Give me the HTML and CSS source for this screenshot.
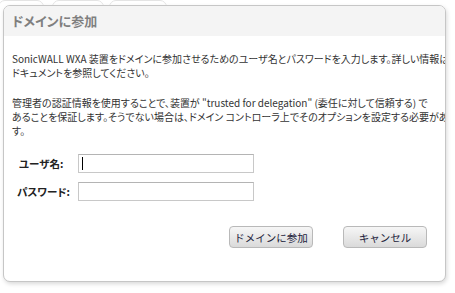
FILE: index.html
```html
<!DOCTYPE html>
<html lang="ja">
<head>
  <meta charset="UTF-8">
  <title>ドメインに参加</title>
  <link rel="stylesheet" href="styles.css">
</head>
<body>
  <div class="tabs">
    <div class="tab t1"></div>
    <div class="tab t2"></div>
    <div class="tab t3"></div>
  </div>
  <div class="dialog">
    <div class="dialog-head">ドメインに参加</div>
    <div class="dialog-body">
      <p>SonicWALL WXA 装置をドメインに参加させるためのユーザ名とパスワードを入力します。詳しい情報は<br>ドキュメントを参照してください。</p>
      <p>管理者の認証情報を使用することで、装置が "trusted for delegation" (委任に対して信頼する) で<br>あることを保証します。そうでない場合は、ドメイン コントローラ上でそのオプションを設定する必要があります<br>す。</p>
      <div class="form-row first">
        <label for="user">ユーザ名:</label>
        <div class="field focused"><input type="text" id="user"></div>
      </div>
      <div class="form-row">
        <label for="pass" class="pass">パスワード:</label>
        <div class="field"><input type="password" id="pass"></div>
      </div>
      <div class="actions">
        <button type="button">ドメインに参加</button>
        <button type="button">キャンセル</button>
      </div>
    </div>
  </div>
</body>
</html>
```

FILE: styles.css
```css
body {
  margin: 0;
  background: #ffffff;
  font-family: "Noto Sans CJK JP", "Liberation Sans", sans-serif;
  color: #333333;
  width: 455px;
  height: 293px;
  overflow: hidden;
}
.tabs {
  display: flex;
  height: 5px;
  overflow: hidden;
}
.tab {
  height: 10px;
  border: 1px solid #e4e4e4;
  border-radius: 7px 7px 0 0;
}
.t1 { width: 44px; margin-left: -2px; }
.t2 { width: 50px; margin-left: 8px; }
.t3 { width: 56px; margin-left: 5px; }
.dialog {
  margin-left: 3px;
  width: 441px;
  height: 275px;
  border: 1px solid #c6c6c6;
  border-radius: 7px;
  background: #ffffff;
  box-shadow: 1px 2px 4px rgba(0,0,0,0.15);
  overflow: hidden;
}
.dialog-head {
  background: #f4f4f4;
  height: 30px;
  line-height: 30px;
  padding-left: 8px;
  font-size: 13px;
  font-weight: bold;
  color: #7f7f7f;
  font-feature-settings: "palt";
}
.dialog-body {
  padding: 16px 0 0 8px;
  font-size: 10px;
  font-feature-settings: "palt";
}
.dialog-body p {
  margin: 0 0 16px 0;
  line-height: 14px;
  white-space: nowrap;
}
.form-row {
  display: flex;
  align-items: center;
  margin-bottom: 9px;
}
.form-row.first {
  margin-top: 9px;
}
.form-row label {
  box-sizing: border-box;
  width: 66px;
  padding-left: 7px;
  font-weight: bold;
  color: #222222;
  font-size: 10.5px;
}
.form-row label.pass {
  padding-left: 5px;
}
.field {
  position: relative;
}
.field input {
  width: 174px;
  height: 17px;
  box-sizing: content-box;
  padding: 0;
  border: 1px solid #c8c8c8;
  border-top-color: #b4b4b4;
  outline: none;
  display: block;
}
.field.focused::after {
  content: "";
  position: absolute;
  left: 4px;
  top: 3px;
  width: 1px;
  height: 13px;
  background: #000000;
}
.actions {
  display: flex;
  justify-content: flex-end;
  gap: 30px;
  margin-top: 25px;
  padding-right: 18px;
}
.actions button {
  width: 84px;
  height: 22px;
  border: 1px solid #b9b9b9;
  border-radius: 4px;
  background: linear-gradient(#f6f6f6, #dadada);
  color: #1c1c3a;
  font-family: inherit;
  font-size: 10.5px;
  padding: 0;
}
```
